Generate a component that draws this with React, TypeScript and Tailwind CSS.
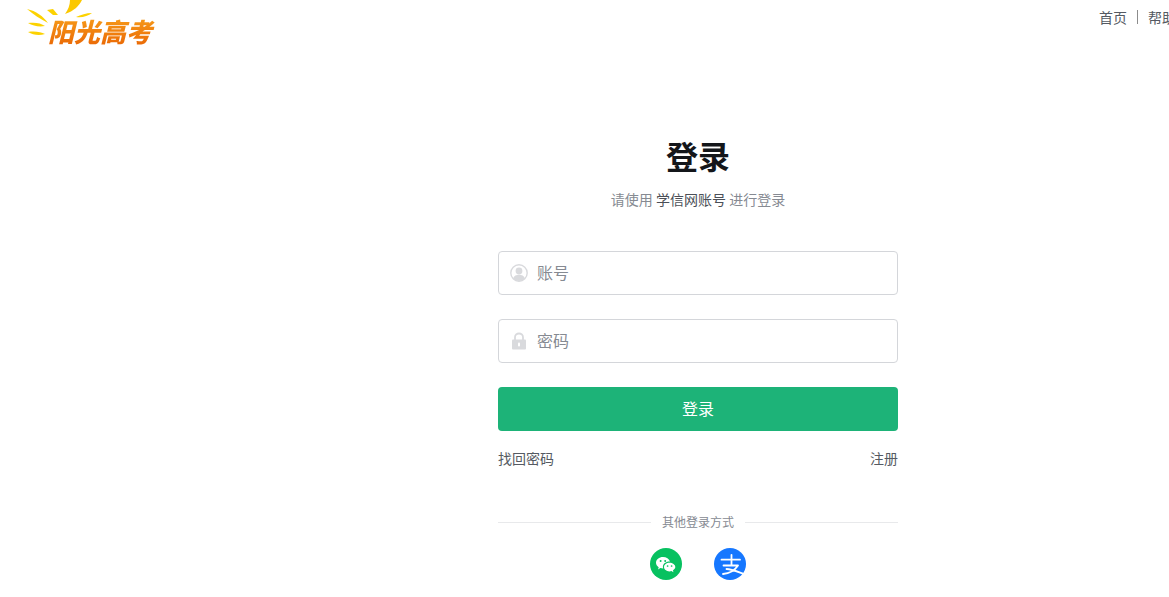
import React from 'react';

const FONT = '"Noto Sans CJK SC", "Liberation Sans", sans-serif';

const SunRays: React.FC = () => (
  <svg width="70" height="46" viewBox="0 0 70 46" className="absolute left-0 top-0">
    <path d="M39 14C48 11 53 6 56 0H44C44 5 42 10 39 14Z" fill="#fbc800" />
    <path d="M21 10L27 9L32 15L27 15Z" fill="#fcd200" />
    <path d="M50 17C55 15 60 13 66 13C62 16 56 18 50 17Z" fill="#fcd200" />
    <path d="M1 9C10 11 17 16 22 23C14 19 7 14 1 9Z" fill="#fcd200" />
    <path d="M2 23C9 22 15 23 19 26C13 27 7 26 2 23Z" fill="#fcd200" />
    <path d="M2 32C9 31 15 32 19 34C13 36 7 35 2 32Z" fill="#fcd200" />
  </svg>
);

const Logo: React.FC = () => (
  <div className="relative w-[130px] h-[46px]">
    <SunRays />
    <span
      className="absolute left-[22px] top-[14px] w-[110px] text-[26px] leading-[34px] font-black italic whitespace-nowrap bg-gradient-to-b from-[#f7a01a] to-[#e96404] bg-clip-text text-transparent"
      style={{ fontFamily: '"Noto Sans CJK SC", sans-serif' }}
    >
      阳光高考
    </span>
  </div>
);

const UserIcon: React.FC = () => (
  <svg width="18" height="18" viewBox="0 0 18 18">
    <circle cx="9" cy="9" r="8.2" fill="#fff" stroke="#d9dadd" strokeWidth="1.4" />
    <circle cx="9" cy="7" r="3.4" fill="#d9dadd" />
    <path d="M3 14.5C4 11.8 6.4 10.8 9 10.8C11.6 10.8 14 11.8 15 14.5C13.6 16.2 11.4 17 9 17C6.6 17 4.4 16.2 3 14.5Z" fill="#d9dadd" />
  </svg>
);

const LockIcon: React.FC = () => (
  <svg width="16" height="18" viewBox="0 0 16 18">
    <path d="M4 8V5.2C4 3 5.8 1.5 8 1.5C10.2 1.5 12 3 12 5.2V8" fill="none" stroke="#d9dadd" strokeWidth="1.8" />
    <rect x="1" y="7.5" width="14" height="10" rx="1" fill="#d9dadd" />
    <rect x="7" y="10.5" width="2" height="4" rx="1" fill="#fff" />
  </svg>
);

const WechatIcon: React.FC = () => (
  <svg width="32" height="32" viewBox="0 0 32 32">
    <circle cx="16" cy="16" r="16" fill="#07c160" />
    <path d="M13 9C9.1 9 6 11.6 6 14.8C6 16.7 7 18.2 8.7 19.3L8 21.4L10.4 20.1C11.3 20.4 12.2 20.6 13.2 20.6C13 20 12.9 19.5 12.9 18.9C12.9 15.9 15.8 13.6 19.4 13.6H20C19.2 11 16.4 9 13 9Z" fill="#fff" />
    <path d="M19.5 14.8C16.4 14.8 14 16.7 14 19.1C14 21.5 16.4 23.4 19.5 23.4C20.2 23.4 20.8 23.3 21.4 23.1L23.5 24.2L22.9 22.4C24.4 21.5 25.3 20.4 25.3 19.1C25.3 16.7 22.6 14.8 19.5 14.8Z" fill="#fff" />
    <circle cx="10.6" cy="13" r="1" fill="#07c160" />
    <circle cx="15.2" cy="13" r="1" fill="#07c160" />
    <circle cx="17.6" cy="18" r="0.85" fill="#07c160" />
    <circle cx="21.6" cy="18" r="0.85" fill="#07c160" />
  </svg>
);

const AlipayIcon: React.FC = () => (
  <svg width="32" height="32" viewBox="0 0 32 32">
    <circle cx="16" cy="16" r="16" fill="#1677ff" />
    <path d="M7.5 11.7H26M17.5 6.8V17.5M9.5 17.5H24C21 22 16 25.5 9 26M12.5 21C18 21 24 24 31 26.5" fill="none" stroke="#fff" strokeWidth="1.8" strokeLinecap="round" strokeLinejoin="round" />
  </svg>
);

const Field: React.FC<{ icon: React.ReactNode; placeholder: string; type?: string }> = ({ icon, placeholder, type = 'text' }) => (
  <div className="flex items-center h-[44px] border border-[#d4d6da] rounded pl-[11px]">
    <span className="flex w-[18px] justify-center shrink-0">{icon}</span>
    <input
      type={type}
      placeholder={placeholder}
      className="ml-[9px] pb-[3px] flex-1 min-w-0 text-base text-[#333] placeholder:text-[#868a92] outline-none bg-transparent"
    />
  </div>
);

const App: React.FC = () => {
  return (
    <div className="w-full h-screen overflow-hidden bg-white" style={{ fontFamily: FONT }}>
      <div className="w-[1396px]">
        <header className="flex justify-between h-[46px] pl-[26px] pr-[192px]">
          <Logo />
          <nav className="flex items-center h-[34px] text-sm text-[#555a62] whitespace-nowrap">
            <a>首页</a>
            <span className="w-px h-[14px] bg-[#8c8c8c] mx-[10px]" />
            <a>帮助中心</a>
          </nav>
        </header>

        <main className="w-[400px] mx-auto pt-[86px]">
          <h1 className="text-[32px] leading-[46px] font-bold text-center text-[#14161a]">登录</h1>
          <p className="mt-[10px] text-sm leading-[22px] text-center text-[#868a92]">
            请使用 <span className="text-[#4b4f57]">学信网账号</span> 进行登录
          </p>

          <div className="mt-[41px] flex flex-col gap-6">
            <Field icon={<UserIcon />} placeholder="账号" />
            <Field icon={<LockIcon />} placeholder="密码" type="password" />
            <button className="h-[44px] pb-[2px] rounded bg-[#1db378] text-white text-base">登录</button>
          </div>

          <div className="mt-[16px] flex justify-between text-sm leading-[22px] text-[#555a62]">
            <a>找回密码</a>
            <a>注册</a>
          </div>

          <div className="mt-[44px] flex items-center gap-[11px] text-xs leading-[18px] text-[#868a92]">
            <span className="flex-1 h-px bg-[#e8e9eb]" />
            其他登录方式
            <span className="flex-1 h-px bg-[#e8e9eb]" />
          </div>

          <div className="mt-[17px] flex justify-center gap-8">
            <WechatIcon />
            <AlipayIcon />
          </div>
        </main>
      </div>
    </div>
  );
};

export default App;
